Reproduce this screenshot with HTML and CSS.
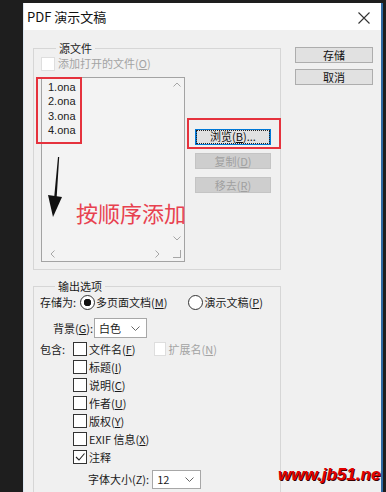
FILE: index.html
```html
<!DOCTYPE html>
<html lang="zh">
<head>
    <meta charset="UTF-8">
    <title>PDF 演示文稿</title>
    <link rel="stylesheet" href="styles.css">
</head>
<body>
    <div class="window">
        <div class="titlebar">
            <span class="title">PDF 演示文稿</span>
            <svg class="close" width="12" height="12" viewBox="0 0 12 12">
                <path d="M0.5 0.5 L11.5 11.5 M11.5 0.5 L0.5 11.5" stroke="#333" stroke-width="1.1" fill="none"/>
            </svg>
        </div>

        <div class="client">
            <div class="main">
                <fieldset class="group source">
                    <legend>源文件</legend>
                    <div class="row">
                        <span class="box off"></span>
                        <span class="muted">添加打开的文件(<u>O</u>)</span>
                    </div>
                    <div class="list-area">
                        <div class="listbox">
                            <ul class="items">
                                <li>1.ona</li>
                                <li>2.ona</li>
                                <li>3.ona</li>
                                <li>4.ona</li>
                            </ul>
                            <div class="vscroll">
                                <svg width="8" height="5" viewBox="0 0 8 5"><path d="M0.5 4.5 L4 1 L7.5 4.5" stroke="#a6a6a6" fill="none"/></svg>
                                <svg width="8" height="5" viewBox="0 0 8 5"><path d="M0.5 0.5 L4 4 L7.5 0.5" stroke="#a6a6a6" fill="none"/></svg>
                            </div>
                            <div class="hscroll">
                                <svg width="5" height="8" viewBox="0 0 5 8"><path d="M4.5 0.5 L1 4 L4.5 7.5" stroke="#a6a6a6" fill="none"/></svg>
                                <svg width="5" height="8" viewBox="0 0 5 8"><path d="M0.5 0.5 L4 4 L0.5 7.5" stroke="#a6a6a6" fill="none"/></svg>
                            </div>
                            <div class="corner"></div>
                        </div>
                        <div class="list-buttons">
                            <button class="btn focus"><span>浏览(<u>B</u>)...</span></button>
                            <button class="btn" disabled>复制(<u>D</u>)</button>
                            <button class="btn" disabled>移去(<u>R</u>)</button>
                        </div>
                    </div>
                </fieldset>

                <fieldset class="group output">
                    <legend>输出选项</legend>
                    <div class="row save-as">
                        <span>存储为:</span>
                        <span class="radio on"></span>
                        <span>多页面文档(<u>M</u>)</span>
                        <span class="radio second"></span>
                        <span>演示文稿(<u>P</u>)</span>
                    </div>
                    <div class="row background">
                        <span>背景(<u>G</u>):</span>
                        <div class="select bg-select">
                            <span>白色</span>
                            <svg width="9" height="5" viewBox="0 0 9 5"><path d="M0.5 0.5 L4.5 4.5 L8.5 0.5" stroke="#666" fill="none"/></svg>
                        </div>
                    </div>
                    <div class="row include">
                        <span class="include-label">包含:</span>
                        <span class="box"></span>
                        <span>文件名(<u>F</u>)</span>
                        <span class="box off ext"></span>
                        <span class="muted">扩展名(<u>N</u>)</span>
                    </div>
                    <div class="row indent"><span class="box"></span><span>标题(<u>I</u>)</span></div>
                    <div class="row indent"><span class="box"></span><span>说明(<u>C</u>)</span></div>
                    <div class="row indent"><span class="box"></span><span>作者(<u>U</u>)</span></div>
                    <div class="row indent"><span class="box"></span><span>版权(<u>Y</u>)</span></div>
                    <div class="row indent"><span class="box"></span><span>EXIF 信息(<u>X</u>)</span></div>
                    <div class="row indent">
                        <span class="box">
                            <svg width="12" height="12" viewBox="0 0 12 12"><path d="M2 6 L5 9 L10.5 2.5" stroke="#222" stroke-width="1.1" fill="none"/></svg>
                        </span>
                        <span>注释</span>
                    </div>
                    <div class="row font-size">
                        <span>字体大小(Z):</span>
                        <div class="select size-select">
                            <span>12</span>
                            <svg width="9" height="5" viewBox="0 0 9 5"><path d="M0.5 0.5 L4.5 4.5 L8.5 0.5" stroke="#666" fill="none"/></svg>
                        </div>
                    </div>
                </fieldset>
            </div>

            <div class="side">
                <button class="btn">存储</button>
                <button class="btn">取消</button>
            </div>
        </div>

        <!-- annotations drawn over the dialog -->
        <div class="mark mark-list"></div>
        <div class="mark mark-browse"></div>
        <svg class="arrow" width="20" height="64" viewBox="0 0 20 64">
            <path d="M11 0 L12.2 0 L9.6 42 L7 42 Z" fill="#111"/>
            <path d="M1 38 L15 40 L6 60 Z" fill="#111"/>
        </svg>
        <div class="note">按顺序添加</div>
        <div class="watermark">www.jb51.net</div>
    </div>
</body>
</html>
```

FILE: styles.css
```css
body {
    margin: 0;
    background-color: #1e1e1e;
    font-family: "Noto Sans CJK SC", "Noto Sans", sans-serif;
    font-size: 11px;
    color: #1a1a1a;
}
.window {
    position: relative;
    margin: 3px 0 0 23px;
    width: 357px;
    height: 489px;
    background-color: #f0f0f0;
    border-left: 1px solid #dbe6f1;
    border-right: 2px solid #2f69a3;
    overflow: hidden;
}
.titlebar {
    display: flex;
    align-items: center;
    height: 27px;
    padding: 0 11px 0 3px;
    background-color: #fff;
}
.title {
    font-size: 13px;
    color: #111;
}
.close {
    margin-left: auto;
    margin-top: 3px;
}
.client {
    display: flex;
    gap: 14px;
    padding: 11px 0 0 9px;
}
.main {
    width: 248px;
}
.side {
    display: flex;
    flex-direction: column;
    gap: 6px;
    width: 78px;
    margin-top: 6px;
}

/* group boxes */
.group {
    box-sizing: border-box;
    width: 248px;
    margin: 0;
    border: 1px solid #d6d6d6;
    min-inline-size: 0;
}
.group legend {
    margin-left: 15px;
    padding: 0 3px;
    line-height: 14px;
}
.source {
    padding: 1px 9px 7px 7px;
}
.output {
    margin-top: 9px;
    padding: 0 0 30px 6px;
}
.row {
    display: flex;
    align-items: center;
    height: 15px;
    line-height: 15px;
    white-space: nowrap;
}
.muted {
    color: #a3a3a3;
}

/* checkbox and radio */
.box {
    box-sizing: border-box;
    display: flex;
    align-items: center;
    justify-content: center;
    width: 14px;
    height: 14px;
    margin-right: 2px;
    background-color: #fff;
    border: 1px solid #333;
}
.box.off {
    border-color: #dedede;
    margin-right: 3px;
}
.radio {
    box-sizing: border-box;
    width: 15px;
    height: 15px;
    margin: 0 1px 0 4px;
    border: 1px solid #333;
    border-radius: 50%;
    background-color: #fff;
}
.radio.on {
    background: radial-gradient(circle, #111 0 3.5px, #fff 4px);
}
.radio.second {
    margin-left: 21px;
}

/* list box */
.list-area {
    display: flex;
    gap: 10px;
    margin-top: 6px;
}
.listbox {
    box-sizing: border-box;
    display: grid;
    grid-template-columns: 1fr 15px;
    grid-template-rows: 1fr 14px;
    width: 144px;
    height: 185px;
    background-color: #f3f3f3;
    border: 1px solid #a3a3a3;
}
.items {
    list-style: none;
    margin: 0;
    padding: 2px 0 0 6px;
    font-family: "Liberation Sans", Arial, sans-serif;
    line-height: 14.3px;
    color: #222;
}
.vscroll {
    display: flex;
    flex-direction: column;
    align-items: center;
    justify-content: space-between;
    padding: 4px 0 6px;
}
.hscroll {
    display: flex;
    align-items: center;
    justify-content: space-between;
    padding: 0 9px 0 8px;
}
.corner {
    margin: 3px 3px 3px 4px;
    border-right: 1px solid #a6a6a6;
    border-bottom: 1px solid #a6a6a6;
}
.list-buttons {
    display: flex;
    flex-direction: column;
    gap: 8px;
    padding-top: 52px;
}

/* buttons */
.btn {
    box-sizing: border-box;
    width: 76px;
    height: 16px;
    padding: 0;
    font-family: inherit;
    font-size: 11px;
    line-height: 14px;
    color: #111;
    background-color: #e1e1e1;
    border: 1px solid #adadad;
}
.side .btn {
    width: 78px;
}
.btn:disabled {
    color: #a0a0a0;
    background-color: #cecece;
    border-color: #c4c4c4;
}
.btn.focus {
    display: flex;
    padding: 1px;
    border: 1px solid #0078d7;
    box-shadow: inset 1px 0 #0078d7, inset -1px 0 #0078d7;
}
.btn.focus span {
    flex: 1;
    line-height: 10px;
    outline: 1px dotted #222;
}

/* output options */
.save-as {
    height: 18px;
}
.background {
    height: 20px;
    margin-top: 7px;
    padding-left: 13px;
}
.select {
    box-sizing: border-box;
    display: flex;
    align-items: center;
    justify-content: space-between;
    height: 20px;
    padding: 0 6px 0 4px;
    background-color: #fff;
    border: 1px solid #a7a7a7;
}
.bg-select {
    width: 53px;
    margin-left: 1px;
}
.include {
    height: 18px;
    margin-top: 2px;
}
.include-label {
    width: 33px;
}
.box.ext {
    width: 12px;
    margin-left: 18px;
}
.indent {
    height: 18px;
    padding-left: 33px;
}
.font-size {
    height: 19px;
    margin-top: 4px;
    padding-left: 48px;
}
.size-select {
    width: 49px;
    height: 19px;
    margin-left: 3px;
}

/* annotations */
.mark {
    position: absolute;
    border: 2px solid #e5323d;
}
.mark-list {
    left: 12px;
    top: 74px;
    width: 42px;
    height: 63px;
}
.mark-browse {
    left: 163px;
    top: 115px;
    width: 90px;
    height: 27px;
}
.arrow {
    position: absolute;
    left: 23px;
    top: 154px;
}
.note {
    position: absolute;
    left: 52px;
    top: 196px;
    font-size: 22px;
    line-height: 26px;
    color: #e8414f;
}
.watermark {
    position: absolute;
    left: 254px;
    top: 462px;
    font-family: "Liberation Sans", Arial, sans-serif;
    font-size: 17px;
    font-weight: bold;
    font-style: italic;
    line-height: 20px;
    color: #e10000;
    text-shadow: 1px 1px 0 #3a0000;
}
```
